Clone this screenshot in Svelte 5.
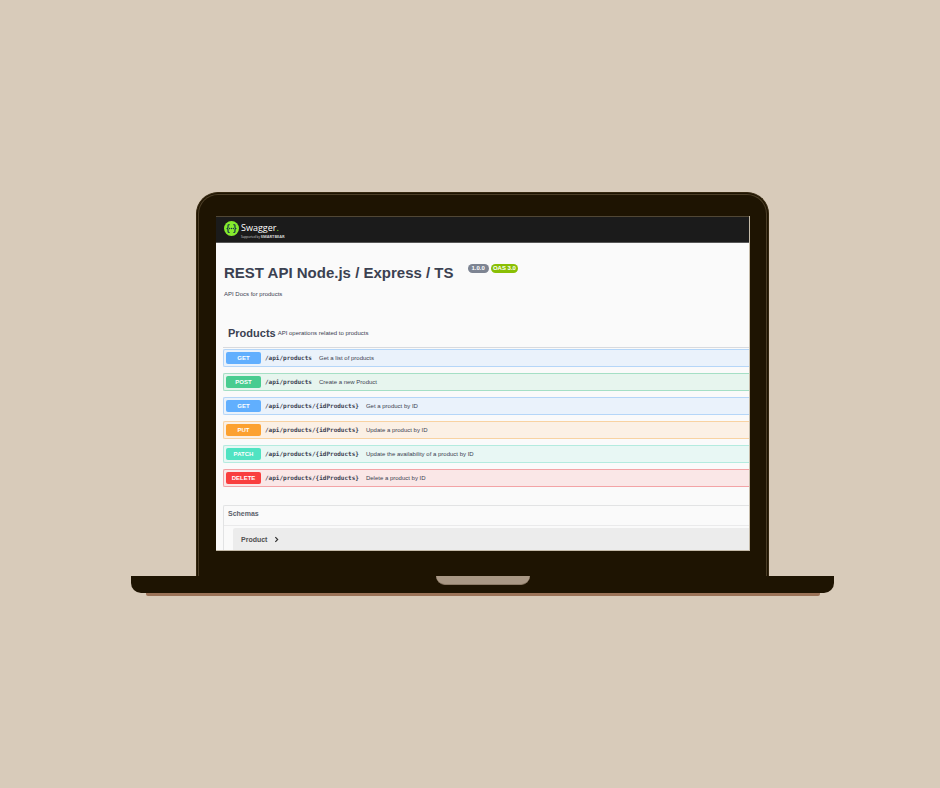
<script>
  const operations = [
    { method: 'get', path: '/api/products', summary: 'Get a list of products' },
    { method: 'post', path: '/api/products', summary: 'Create a new Product' },
    { method: 'get', path: '/api/products/{idProducts}', summary: 'Get a product by ID' },
    { method: 'put', path: '/api/products/{idProducts}', summary: 'Update a product by ID' },
    { method: 'patch', path: '/api/products/{idProducts}', summary: 'Update the availability of a product by ID' },
    { method: 'delete', path: '/api/products/{idProducts}', summary: 'Delete a product by ID' }
  ];
</script>

<main class="stage">
  <div class="lid">
    <div class="screen">
      <header class="topbar">
        <a class="brand" href="#top" aria-label="Swagger, supported by SmartBear">
          <svg class="mark" viewBox="0 0 32 32" aria-hidden="true">
            <circle cx="16" cy="16" r="16" fill="#85ea2d" />
            <g fill="none" stroke="#173647" stroke-width="2.6">
              <path d="M12 7.500c-3 0-3.600 1.200-3.400 4 .2 2.900-.4 4.500-3.100 4.500 2.700 0 3.300 1.600 3.100 4.500-.2 2.800.4 4 3.400 4" />
              <path d="M20 7.500c3 0 3.600 1.200 3.400 4-.2 2.900.4 4.500 3.100 4.500-2.700 0-3.300 1.600-3.100 4.500.2 2.800-.4 4-3.400 4" />
            </g>
            <g fill="#173647">
              <circle cx="12" cy="16" r="1.500" />
              <circle cx="16" cy="16" r="1.500" />
              <circle cx="20" cy="16" r="1.500" />
            </g>
          </svg>
          <span class="wordmark">
            <span class="name">Swagger<span class="dot">.</span></span>
            <span class="support">Supported by <b>SMARTBEAR</b></span>
          </span>
        </a>
      </header>

      <section class="info">
        <div class="heading">
          <h1>REST API Node.js / Express / TS</h1>
          <span class="badge">1.0.0</span>
          <span class="badge oas">OAS 3.0</span>
        </div>
        <p>API Docs for products</p>
      </section>

      <section class="group">
        <div class="tag">
          <h2>Products</h2>
          <p>API operations related to products</p>
        </div>
        {#each operations as op}
          <button type="button" class="operation {op.method}">
            <span class="method">{op.method.toUpperCase()}</span>
            <span class="path">{op.path}</span>
            <span class="summary">{op.summary}</span>
          </button>
        {/each}
      </section>

      <section class="schemas">
        <h3>Schemas</h3>
        <button type="button" class="model">
          Product
          <svg viewBox="0 0 6 6" aria-hidden="true"><path d="M2 1l2 2-2 2" fill="none" stroke="#303030" stroke-width="1" /></svg>
        </button>
      </section>
    </div>
  </div>
  <div class="base"><div class="notch"></div></div>
  <div class="foot"></div>
</main>

<style>
  :global(body) {
    margin: 0;
    background: #d8cbba;
  }
  * {
    box-sizing: border-box;
  }
  h1, h2, h3, p {
    margin: 0;
  }
  .stage {
    padding: 192px 106px 192px 131px;
    font-family: "Liberation Sans", Arial, sans-serif;
    color: #3b4151;
  }
  .lid {
    position: relative;
    margin: 0 65px;
    padding: 23px 18px 25px 19px;
    border: 1px solid #35270f;
    border-bottom: 0;
    border-radius: 22px 22px 0 0;
    background: #1e1402;
  }
  .lid::before {
    content: "";
    position: absolute;
    inset: 1px 1px 0;
    border: 1px solid #4b3d26;
    border-bottom: 0;
    border-radius: 20px 20px 0 0;
    pointer-events: none;
  }
  .screen {
    overflow: hidden;
    border: solid #c5bba9;
    border-width: 0 1px 1px 0;
    background: #fafafa;
  }
  .topbar {
    display: flex;
    align-items: center;
    height: 27px;
    padding: 0 8px;
    border-top: 1px solid #514735;
    border-bottom: 1px solid #575757;
    background: #1b1b1b;
  }
  .brand {
    display: flex;
    gap: 2px;
    color: #fff;
    text-decoration: none;
  }
  .mark {
    width: 15px;
    height: 15px;
  }
  .wordmark {
    display: flex;
    flex-direction: column;
    height: 17px;
    white-space: nowrap;
  }
  .name {
    font: 9px/14px "Open Sans", sans-serif;
  }
  .dot {
    color: #85ea2d;
  }
  .support {
    color: #d0d0d0;
    font: 3px/4px "Open Sans", sans-serif;
  }
  .support b {
    font-size: 4px;
  }
  .info {
    padding: 20px 8px 26px;
  }
  .heading {
    display: flex;
    align-items: flex-start;
    gap: 2px;
  }
  h1 {
    margin-right: 12px;
    font-size: 15px;
    line-height: 20px;
  }
  .badge {
    margin-top: 1px;
    padding: 0 4px;
    border-radius: 5px;
    background: #7d8492;
    color: #fff;
    font-size: 6px;
    font-weight: bold;
    line-height: 9px;
  }
  .oas {
    padding: 0 2px;
    background: #89bf04;
  }
  .info p {
    margin-top: 7px;
    font-size: 6px;
    line-height: 8px;
  }
  .group {
    padding-left: 7px;
  }
  .tag {
    display: flex;
    align-items: center;
    gap: 2px;
    height: 18px;
    margin-bottom: 1px;
    padding: 0 5px 5px;
    border-bottom: 1px solid #d8dade;
    box-sizing: content-box;
  }
  h2 {
    font-size: 11px;
    line-height: 14px;
  }
  .tag p {
    font-size: 6px;
    line-height: 8px;
  }
  .operation {
    display: flex;
    align-items: center;
    width: 100%;
    height: 18px;
    margin: 0 0 6px;
    padding: 0 2px;
    border: 1px solid var(--edge);
    border-right: 0;
    border-radius: 2px 0 0 2px;
    background: var(--tint);
    color: #3b4151;
    font: 6px/8px "Liberation Sans", Arial, sans-serif;
    text-align: left;
  }
  .method {
    width: 35px;
    border-radius: 2px;
    background: var(--solid);
    color: #fff;
    font-weight: bold;
    line-height: 12px;
    text-align: center;
  }
  .path {
    margin: 0 7px 0 4px;
    font-family: "DejaVu Sans Mono", monospace;
    font-weight: bold;
  }
  .get {
    --solid: #61affe;
    --edge: #b5d6f8;
    --tint: #eaf2fb;
  }
  .post {
    --solid: #49cc90;
    --edge: #a5dfc5;
    --tint: #e7f5ee;
  }
  .put {
    --solid: #fca130;
    --edge: #f8d2a2;
    --tint: #fbf0e5;
  }
  .patch {
    --solid: #50e3c2;
    --edge: #b4ebdf;
    --tint: #e8f7f4;
  }
  .delete {
    --solid: #f93e3e;
    --edge: #f3a3a6;
    --tint: #fae7e7;
  }
  .schemas {
    margin: 18px 0 0 7px;
    border: solid #e2e3e4;
    border-width: 1px 0 0 1px;
    border-radius: 2px 0 0 0;
  }
  h3 {
    padding: 0 4px 3px;
    border-bottom: 1px solid #eaeaeb;
    color: #5a5f6b;
    font-size: 7px;
    line-height: 16px;
  }
  .model {
    display: flex;
    align-items: center;
    gap: 6px;
    width: calc(100% - 9px);
    height: 22px;
    margin: 2px 0 0 9px;
    padding: 0 8px;
    border: 0;
    border-radius: 2px 0 0 0;
    background: #ececec;
    color: #505050;
    font: bold 7px/9px "Liberation Sans", Arial, sans-serif;
  }
  .model svg {
    width: 7px;
    height: 7px;
  }
  .base {
    height: 17px;
    border-radius: 0 0 10px 10px;
    background: #1e1402;
  }
  .notch {
    width: 94px;
    height: 9px;
    margin: 0 auto;
    border-bottom: 1px solid #8c7a66;
    border-radius: 0 0 9px 9px;
    background: #a99885;
  }
  .foot {
    height: 3px;
    margin: 0 14px 0 15px;
    border-radius: 0 0 2px 2px;
    background: #9b7358;
  }
</style>
